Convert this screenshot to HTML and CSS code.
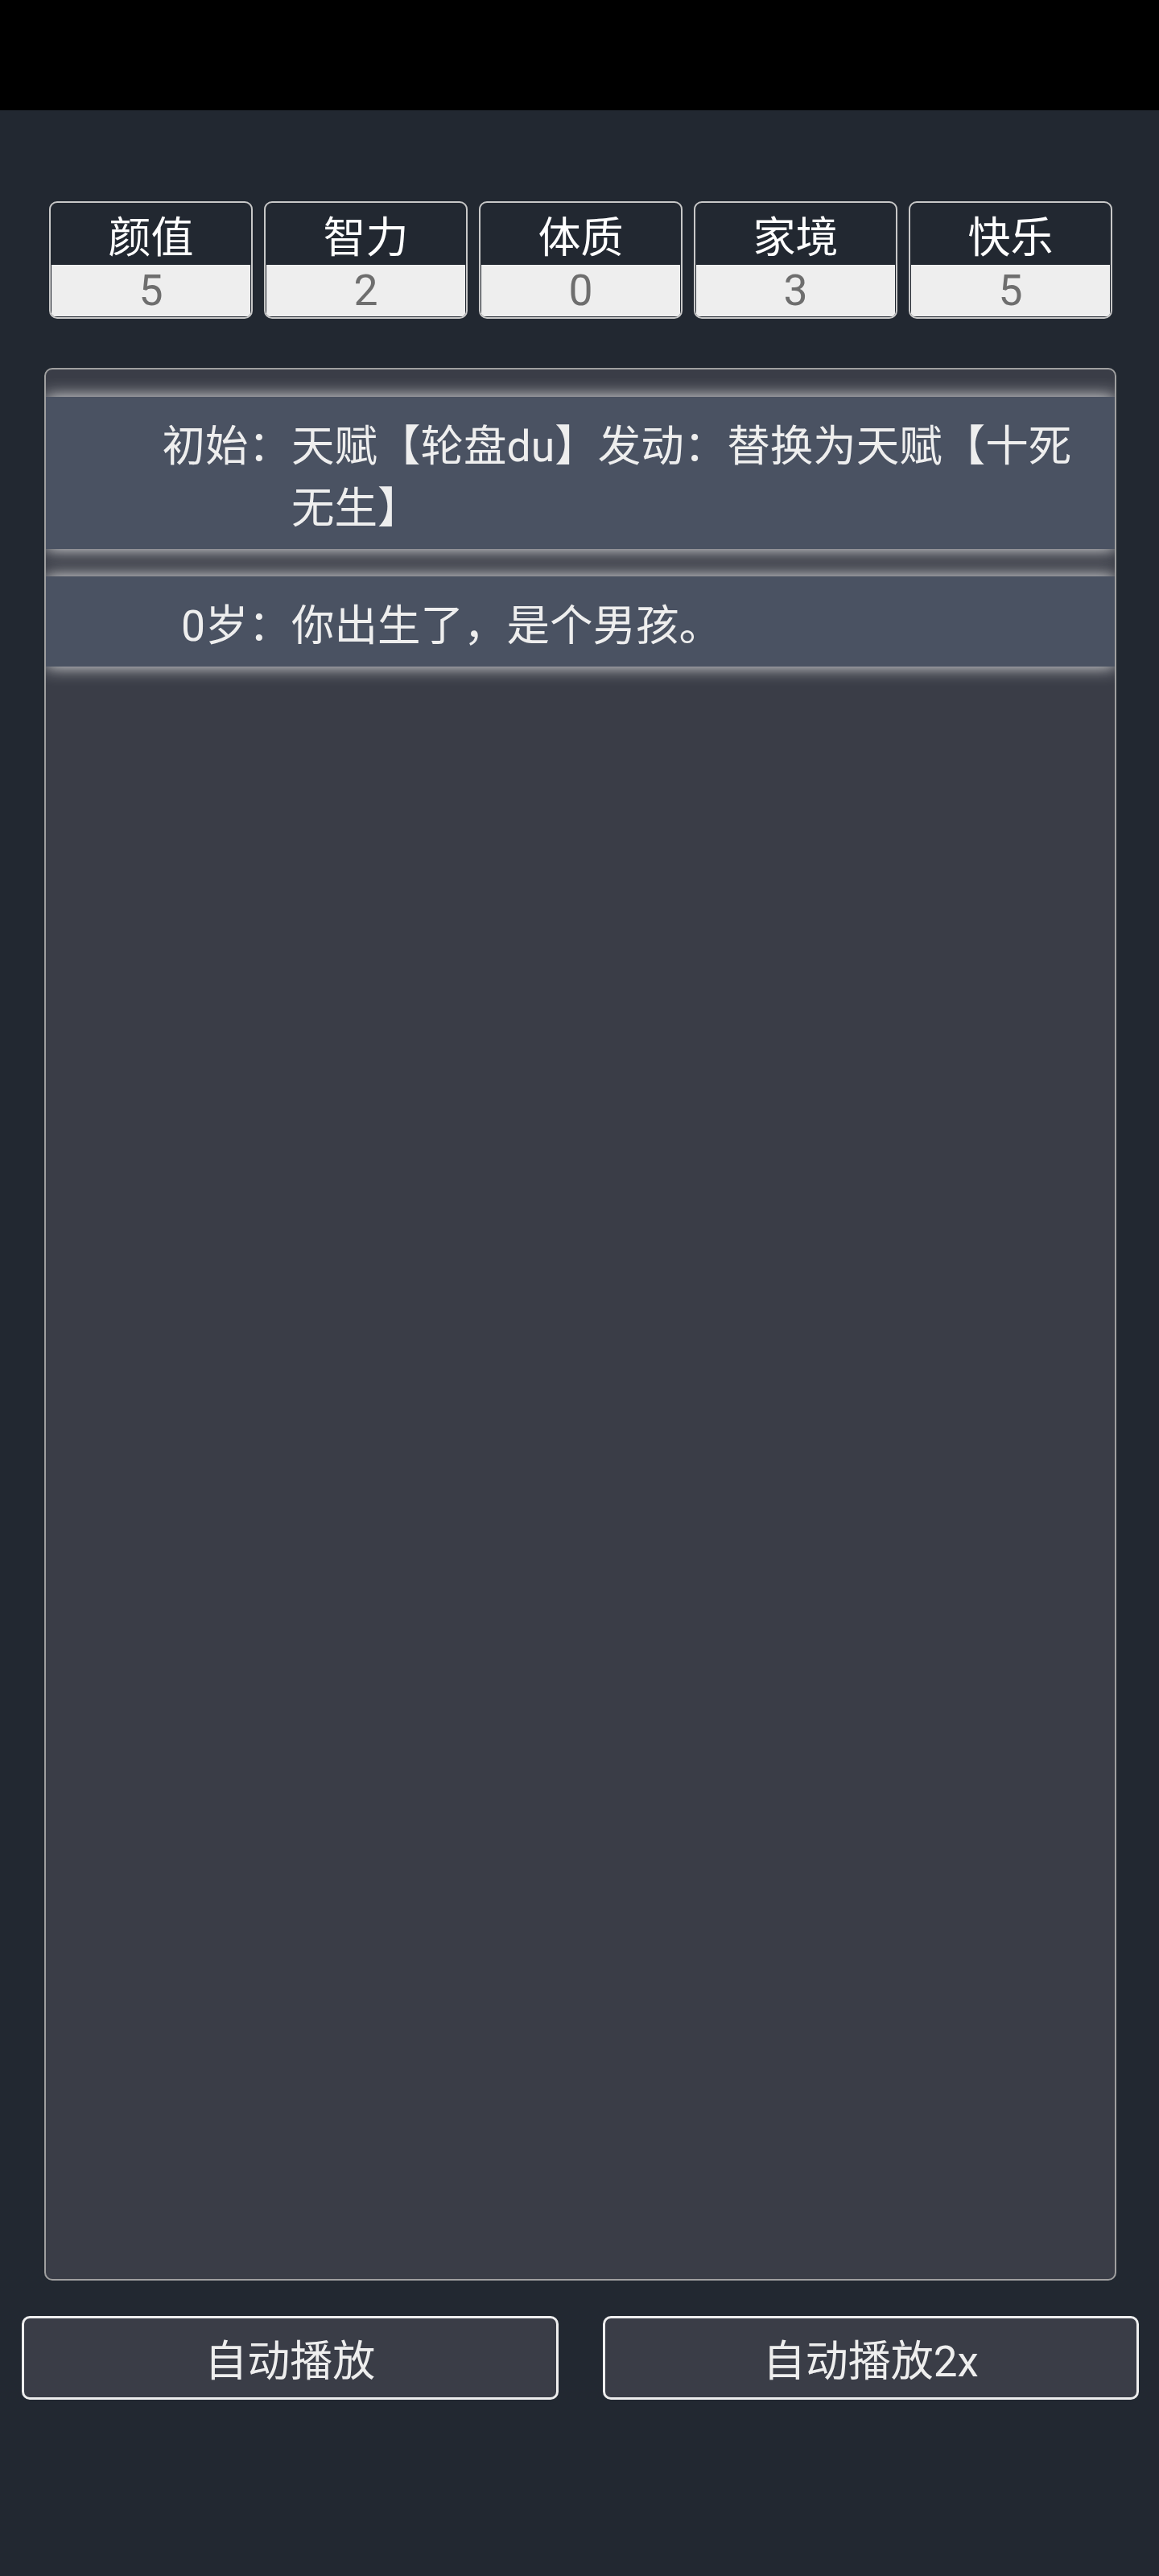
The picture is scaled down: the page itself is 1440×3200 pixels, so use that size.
FILE: index.html
```html
<!DOCTYPE html>
<html lang="zh-CN">
<head>
<meta charset="utf-8">
<title>人生重开模拟器</title>
<link rel="stylesheet" href="styles.css">
</head>
<body>
<div class="statusbar"></div>
<main class="app">
  <ul class="stats">
    <li class="stat"><div class="stat-name">颜值</div><div class="stat-value">5</div></li>
    <li class="stat"><div class="stat-name">智力</div><div class="stat-value">2</div></li>
    <li class="stat"><div class="stat-name">体质</div><div class="stat-value">0</div></li>
    <li class="stat"><div class="stat-name">家境</div><div class="stat-value">3</div></li>
    <li class="stat"><div class="stat-name">快乐</div><div class="stat-value">5</div></li>
  </ul>
  <ul class="trajectory">
    <li class="event"><span class="age">初始：</span><span class="text">天赋【轮盘du】发动：替换为天赋【十死无生】</span></li>
    <li class="event"><span class="age">0岁：</span><span class="text">你出生了，是个男孩。</span></li>
  </ul>
  <div class="actions">
    <button class="btn" type="button">自动播放</button>
    <button class="btn" type="button">自动播放2x</button>
  </div>
</main>
</body>
</html>
```
FILE: styles.css
```css
html, body {
  margin: 0;
  padding: 0;
}

body {
  background: #222831;
  color: #eeeeee;
  font-family: Roboto, "Noto Sans CJK SC", sans-serif;
  font-size: 53.5px;
  min-height: 3200px;
}

.statusbar {
  height: 137px;
  background: #000000;
}

.stats {
  list-style: none;
  margin: 113px 58px 0 61px;
  padding: 0;
  display: grid;
  grid-template-columns: repeat(5, 253px);
  column-gap: 14px;
}

.stat {
  box-sizing: border-box;
  height: 146px;
  border: 2px solid #c8c8c8;
  border-radius: 10px;
  background: #222831;
  padding: 0 1px 1px;
  display: flex;
  flex-direction: column;
  overflow: hidden;
}

.stat-name {
  height: 77px;
  line-height: 76px;
  padding-top: 1px;
  box-sizing: border-box;
  text-align: center;
  color: #ffffff;
  font-family: "Noto Sans CJK SC", sans-serif;
  font-size: 53px;
}

.stat-value {
  height: 64px;
  line-height: 64px;
  background: #eeeeee;
  color: #6e6e6e;
  text-align: center;
}

.trajectory {
  list-style: none;
  box-sizing: border-box;
  height: 2376px;
  margin: 61px 53px 0 55px;
  padding: 34px 0;
  border: 2px solid #a0a0a0;
  border-radius: 10px;
  background: #3a3d47;
  overflow: hidden;
  display: flex;
  flex-direction: column;
  gap: 34px;
}

.event {
  display: flex;
  align-items: flex-start;
  padding: 17.5px 30px 17.5px 0;
  background: #4a5262;
  box-shadow: 0 0 20px #eeeeee;
  line-height: normal;
}

.age {
  flex: 0 0 305px;
  text-align: right;
}

.text {
  flex: 1 1 auto;
  min-width: 0;
}

.actions {
  display: flex;
  gap: 55px;
  margin: 44px 25px 0 27px;
}

.btn {
  box-sizing: border-box;
  width: 667px;
  height: 104px;
  padding: 0;
  border: 3px solid #eeeeee;
  border-radius: 10px;
  background: #3a3d47;
  color: #eeeeee;
  font-family: Roboto, "Noto Sans CJK SC", sans-serif;
  font-size: 53px;
  line-height: normal;
  cursor: pointer;
}
```
